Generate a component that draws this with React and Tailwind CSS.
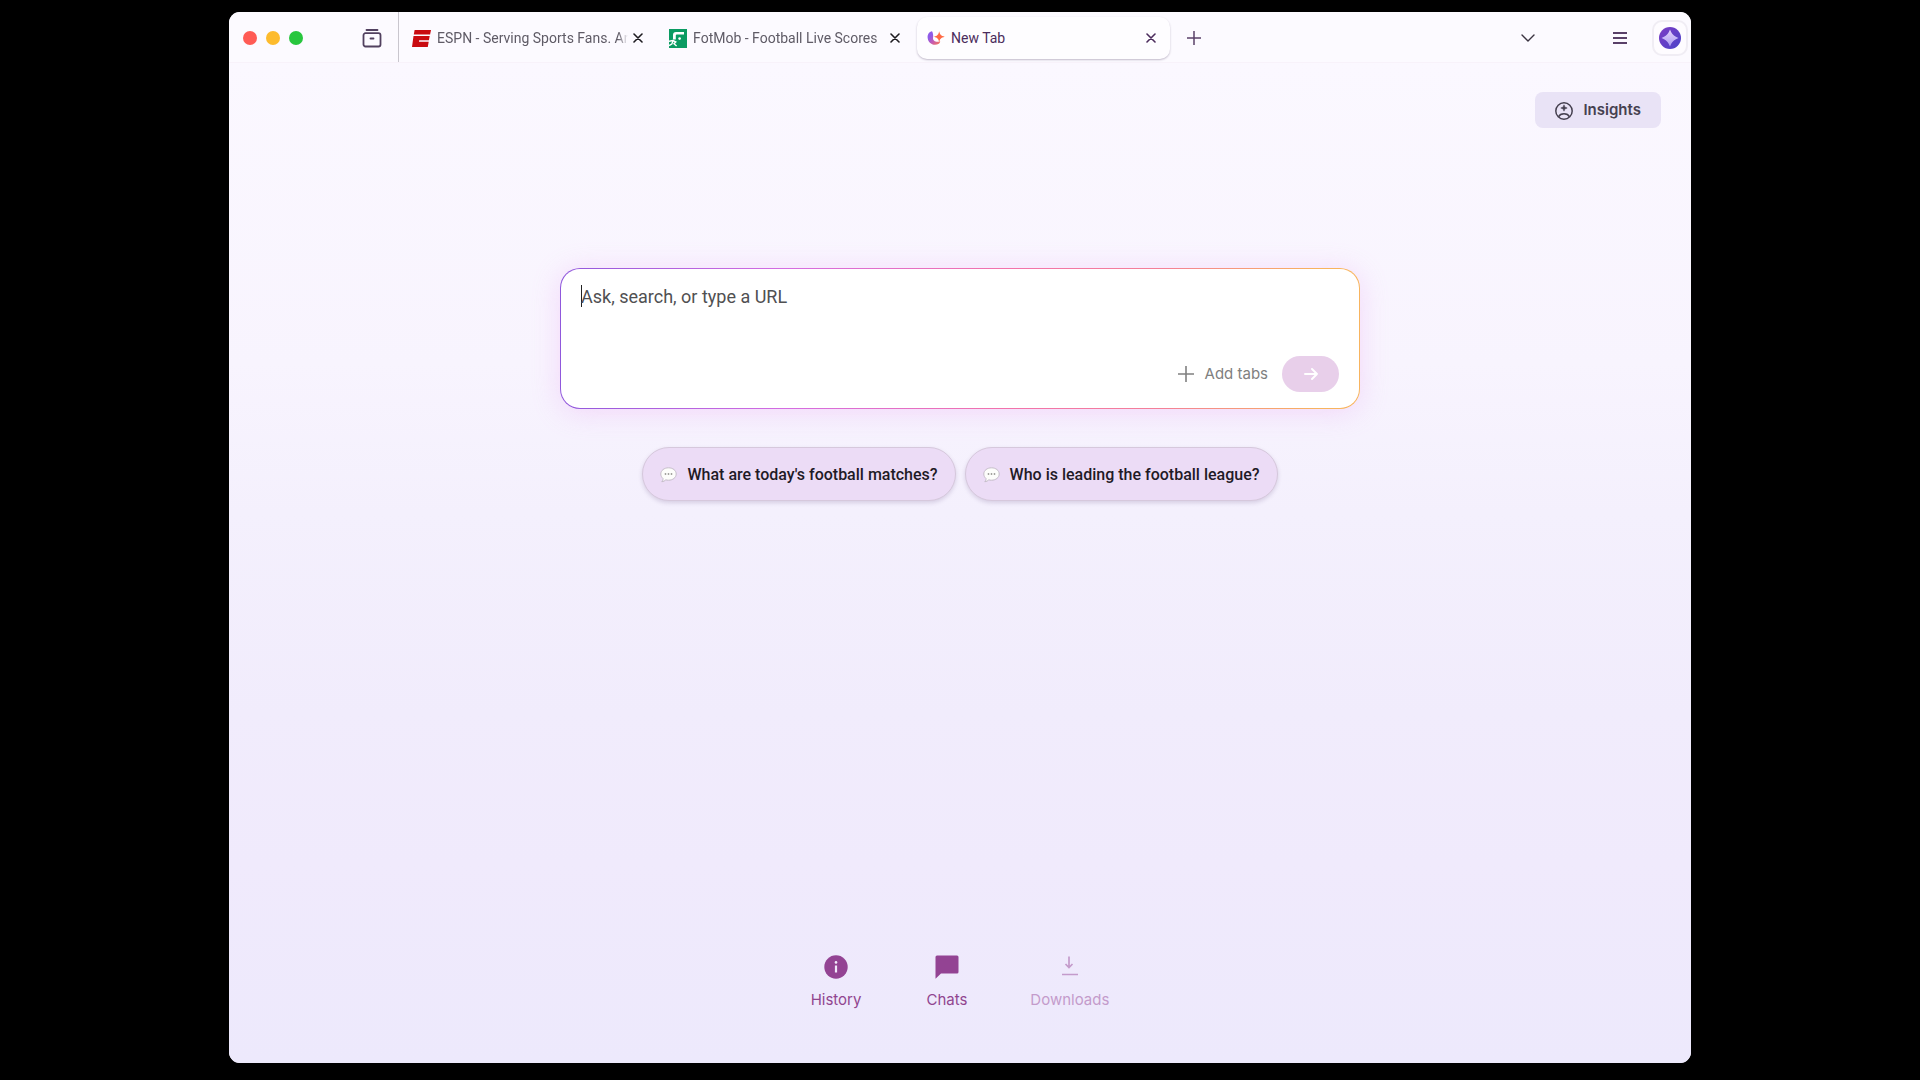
import React from "react";

function Close({ className }) {
  return (
    <svg viewBox="0 0 10 10" className={className} fill="none" stroke="currentColor" strokeWidth="1.6" strokeLinecap="round">
      <path d="M1 1l8 8M9 1L1 9" />
    </svg>
  );
}

function EspnIcon() {
  return (
    <svg viewBox="0 0 19 17" className="h-[17px] w-[19px] shrink-0" fill="#c90a10">
      <path d="M2.6 0H19l-.9 4.6H1.8z" />
      <path d="M1.5 6H17.7l-.8 4.3H7.2l-.3 1.5h9.8l-.9 5.2H0z" />
    </svg>
  );
}

function FotMobIcon() {
  return (
    <svg viewBox="0 0 18 19" className="h-[19px] w-[18px] shrink-0">
      <rect width="18" height="19" fill="#0b9b62" />
      <path d="M4 10.500V6Q4 3 7 3h8v2.600H7.800q-1 0-1 1V10.500z" fill="#fff" />
      <circle cx="10.600" cy="9.600" r="1.300" fill="#fff" />
      <path d="M0 12.200l4-.6 2.800 1.400-1.800 1.800 2.600 2.200M4 12l-1.200 3L0 16.600" fill="none" stroke="#fff" strokeWidth="1.400" />
    </svg>
  );
}

function SparkIcon() {
  return (
    <svg viewBox="0 0 18 16" className="h-4 w-[18px] shrink-0">
      <defs>
        <linearGradient id="crescent" x1="0" y1="0" x2="1" y2="1">
          <stop offset="0.3" stopColor="#8f5ae8" />
          <stop offset="0.6" stopColor="#c65bb0" />
          <stop offset="1" stopColor="#ff7a4d" />
        </linearGradient>
      </defs>
      <path d="M5 1.200C2.300 1.500.4 4.200.6 7.500.9 11.800 4 14.800 8 14.800c2.800 0 4.700-1.200 5.300-3.300-1.800-.3-2.600.5-4 .2C7 11.200 5.800 9.800 6 8c.1-.8.300-1.300.2-2C6.100 4.300 5.900 2.600 5 1.200z" fill="url(#crescent)" />
      <path d="M12.200 1.300c.6 3.200 1.700 4.500 5.500 5.400-3.800 1-4.900 2.300-5.500 5.500-.6-3.200-1.700-4.500-5.200-5.500 3.500-.9 4.600-2.200 5.200-5.400z" fill="#ff6a45" />
    </svg>
  );
}

function ChatBubble() {
  return (
    <svg viewBox="0 0 17 16" className="h-4 w-[17px] shrink-0">
      <path d="M8.500.8c4.300 0 7.700 2.600 7.700 6.200s-3.400 6.200-7.700 6.200c-1 0-1.900-.1-2.700-.4-.9.9-2.300 1.800-4 1.900 1-.9 1.300-2 1.200-3.200C1.600 10.300.8 8.800.8 7 .8 3.400 4.200.8 8.500.8z" fill="#fdfdfb" stroke="#c4bcc8" strokeWidth="1" />
      <g fill="#9c9c98">
        <circle cx="5.500" cy="7" r="0.900" />
        <circle cx="8.500" cy="7" r="0.900" />
        <circle cx="11.500" cy="7" r="0.900" />
      </g>
    </svg>
  );
}

function Tab({ icon, title }) {
  return (
    <div className="flex h-[42px] min-w-0 flex-[0_1_257px] items-center pr-[12px] pl-[9px] text-[#5f5b66]">
      {icon}
      <span className="ml-[6px] min-w-0 flex-1 overflow-hidden text-[14px] whitespace-nowrap [mask-image:linear-gradient(to_right,black_calc(100%-10px),transparent)]">{title}</span>
      <button aria-label={"Close " + title} className="flex h-5 w-5 shrink-0 items-center justify-center text-[#1d1b20]">
        <Close className="h-[10px] w-[10px]" />
      </button>
    </div>
  );
}

function Toolbar() {
  return (
    <header className="flex h-[51px] items-center border-b border-[#f8f2fa] bg-[#fcfaff]">
      <div className="flex w-[170px] shrink-0 items-center justify-between self-stretch border-r border-[#c9c6ce] pt-px pr-4 pl-[14px]">
        <div className="flex gap-[9px]">
          <button aria-label="Close window" className="h-[14px] w-[14px] rounded-full bg-[#ff5b55]" />
          <button aria-label="Minimize window" className="h-[14px] w-[14px] rounded-full bg-[#fdbb2d]" />
          <button aria-label="Zoom window" className="h-[14px] w-[14px] rounded-full bg-[#28c63e]" />
        </div>
        <button aria-label="Collections" className="text-[#51405f]">
          <svg viewBox="0 0 20 20" className="h-5 w-5" fill="none" stroke="currentColor" strokeWidth="1.800" strokeLinecap="round">
            <path d="M4.500 2h11" />
            <rect x="1.500" y="5.200" width="17" height="13.300" rx="2" />
            <path d="M8.500 10.500h3" />
          </svg>
        </button>
      </div>
      <nav aria-label="Tabs" className="flex min-w-0 flex-1 items-center pt-0.5 pl-1 font-['Roboto',sans-serif]">
        <Tab icon={<EspnIcon />} title="ESPN - Serving Sports Fans. Any" />
        <Tab icon={<FotMobIcon />} title="FotMob - Football Live Scores" />
        <div className="flex h-[42px] min-w-0 flex-[0_1_253px] items-center rounded-[10px] bg-[#fefdff] pr-[9px] pl-[10px] text-[#4b2c5c] shadow-[0_1px_2px_rgba(60,40,80,0.3)]">
          <SparkIcon />
          <span className="ml-[6px] flex-1 text-[14px]">New Tab</span>
          <button aria-label="Close New Tab" className="flex h-5 w-5 items-center justify-center">
            <Close className="h-[10px] w-[10px]" />
          </button>
        </div>
        <button aria-label="Open tab" className="ml-[17px] text-[#5a4069]">
          <svg viewBox="0 0 14 14" className="h-[14px] w-[14px]" fill="none" stroke="currentColor" strokeWidth="1.500">
            <path d="M7 0v14M0 7h14" />
          </svg>
        </button>
      </nav>
      <div className="flex shrink-0 items-center pt-px pr-[3px]">
        <button aria-label="List all tabs" className="mr-[78px] text-[#3a3340]">
          <svg viewBox="0 0 14 8" className="h-2 w-[14px]" fill="none" stroke="currentColor" strokeWidth="1.400" strokeLinecap="round" strokeLinejoin="round">
            <path d="M1 1l6 6 6-6" />
          </svg>
        </button>
        <button aria-label="Menu" className="mr-[25px] text-[#5a4069]">
          <svg viewBox="0 0 14 12" className="h-3 w-[14px]" fill="none" stroke="currentColor" strokeWidth="1.800">
            <path d="M0 1h14M0 6h14M0 11h14" />
          </svg>
        </button>
        <button aria-label="Assistant" className="flex h-9 w-9 items-center justify-center rounded-[10px] border-2 border-[#f0edf4] bg-[#fefcff]">
          <svg viewBox="0 0 22 22" className="h-[22px] w-[22px]">
            <defs>
              <linearGradient id="orb" x1="0" y1="0" x2="1" y2="1">
                <stop offset="0" stopColor="#7d3cc4" />
                <stop offset="1" stopColor="#4a44c9" />
              </linearGradient>
              <linearGradient id="star" x1="0" y1="0" x2="0" y2="1">
                <stop offset="0" stopColor="#e6d4fb" />
                <stop offset="1" stopColor="#a99af2" />
              </linearGradient>
            </defs>
            <circle cx="11" cy="11" r="11" fill="url(#orb)" />
            <path d="M11 2.500c1.700 4.400 4 6.800 8.500 8.500-4.500 1.700-6.800 4.100-8.500 8.500-1.700-4.400-4-6.800-8.500-8.500 4.500-1.700 6.800-4.100 8.500-8.500z" fill="url(#star)" />
          </svg>
        </button>
      </div>
    </header>
  );
}

function SearchBox() {
  return (
    <form
      onSubmit={(e) => e.preventDefault()}
      className="w-full max-w-[800px] rounded-[20px] bg-[linear-gradient(90deg,#9058dc_0%,#d46ce2_28%,#f272ac_55%,#f48098_75%,#f8b45e_95%)] p-px shadow-[0_3px_28px_rgba(232,150,240,0.3)]"
    >
      <div className="flex h-[139px] flex-col justify-between rounded-[19px] bg-white pt-[11px] pr-[20px] pb-[16px] pl-[20px]">
        <div className="flex items-center">
          <span className="-mr-px h-[22px] w-px bg-[#222]" />
          <input aria-label="Ask, search, or type a URL" placeholder="Ask, search, or type a URL" className="h-8 flex-1 bg-transparent font-['Roboto',sans-serif] text-[18px] text-[#3c3c3c] outline-none placeholder:text-[#505052]" />
        </div>
        <div className="flex items-center justify-end">
          <button type="button" className="mr-[14px] flex items-center gap-[11px] text-[15px] text-[#808080]">
            <svg viewBox="0 0 16 16" className="h-4 w-4" fill="none" stroke="currentColor" strokeWidth="1.600">
              <path d="M8 0v16M0 8h16" />
            </svg>
            Add tabs
          </button>
          <button type="submit" aria-label="Go" className="flex h-9 w-[57px] items-center justify-center rounded-full bg-[#e8cfea] text-white">
            <svg viewBox="0 0 14 12" className="h-3 w-[14px]" fill="none" stroke="currentColor" strokeWidth="1.900" strokeLinecap="round" strokeLinejoin="round">
              <path d="M1 6h12M8 1l5 5-5 5" />
            </svg>
          </button>
        </div>
      </div>
    </form>
  );
}

function Suggestion({ children }) {
  return (
    <button className="flex h-[54px] items-center gap-[10px] rounded-full border border-[#d6c8dc] bg-[#ecdcf6] px-[17px] pt-0.5 font-['Roboto',sans-serif] text-[16px] font-medium text-[#1f1a26] shadow-[0_2px_4px_rgba(80,50,110,0.18)]">
      <ChatBubble />
      {children}
    </button>
  );
}

function Shortcuts() {
  return (
    <footer className="flex items-start justify-center pb-[52px] text-[15px] text-[#91458f]">
      <button className="flex flex-col items-center gap-[10px]">
        <svg viewBox="0 0 24 24" className="h-6 w-6">
          <circle cx="12" cy="12" r="11.700" fill="#934393" />
          <circle cx="12" cy="7.400" r="1.300" fill="#f1e9fb" />
          <path d="M12 10.500v7" stroke="#f1e9fb" strokeWidth="2.200" />
        </svg>
        History
      </button>
      <button className="ml-[65px] flex flex-col items-center gap-[10px]">
        <svg viewBox="0 0 24 24" className="h-6 w-6" fill="#934393">
          <path d="M2 .5h20a1.500 1.500 0 0 1 1.500 1.500v15a1.500 1.500 0 0 1-1.500 1.500H6L.5 23.800V2A1.500 1.500 0 0 1 2 .5z" />
        </svg>
        Chats
      </button>
      <button disabled className="ml-[63px] flex flex-col items-center gap-[10px] text-[#c49bcb]">
        <svg viewBox="0 0 24 24" className="h-6 w-6" fill="none" stroke="currentColor" strokeWidth="1.700">
          <path d="M11 1.500v11M7.500 9l3.500 3.500L14.500 9M4 19.500h16" />
        </svg>
        Downloads
      </button>
    </footer>
  );
}

export default function App() {
  return (
    <div className="flex min-h-screen flex-col bg-black px-[11.93%] pt-3 pb-[17px] font-['Inter',sans-serif]">
      <div className="flex flex-1 flex-col overflow-hidden rounded-[11px] bg-[#f5f0fe]">
        <Toolbar />
        <main className="flex flex-1 flex-col bg-[linear-gradient(180deg,#fbf8ff_0%,#f8f4fe_30%,#f4f0fd_45%,#f1ecfc_65%,#f0eafc_80%,#ede9fc_100%)]">
          <div className="flex justify-end pt-[29px] pr-[30px]">
            <button className="flex h-9 items-center gap-[10px] rounded-lg bg-[#e9e3f6] px-5 pt-px text-[15px] font-semibold text-[#464150]">
              <svg viewBox="0 0 18 18" className="h-[18px] w-[18px]" fill="none" stroke="currentColor" strokeWidth="1.500">
                <circle cx="9" cy="9" r="8.200" />
                <path d="M3.500 14.800c1-2 3-3 5.500-3s4.500 1 5.500 3" />
                <path d="M9 2.800c.4 2 1.200 2.800 3.200 3.200C10.200 6.400 9.400 7.200 9 9.200 8.600 7.200 7.800 6.400 5.800 6 7.800 5.600 8.600 4.800 9 2.800z" fill="currentColor" strokeWidth="0.600" />
              </svg>
              Insights
            </button>
          </div>
          <div className="flex flex-1 flex-col items-center px-6 pt-[140px]">
            <SearchBox />
            <div className="mt-[38px] flex flex-wrap justify-center gap-[9px]">
              <Suggestion>What are today's football matches?</Suggestion>
              <Suggestion>Who is leading the football league?</Suggestion>
            </div>
          </div>
          <Shortcuts />
        </main>
      </div>
    </div>
  );
}
